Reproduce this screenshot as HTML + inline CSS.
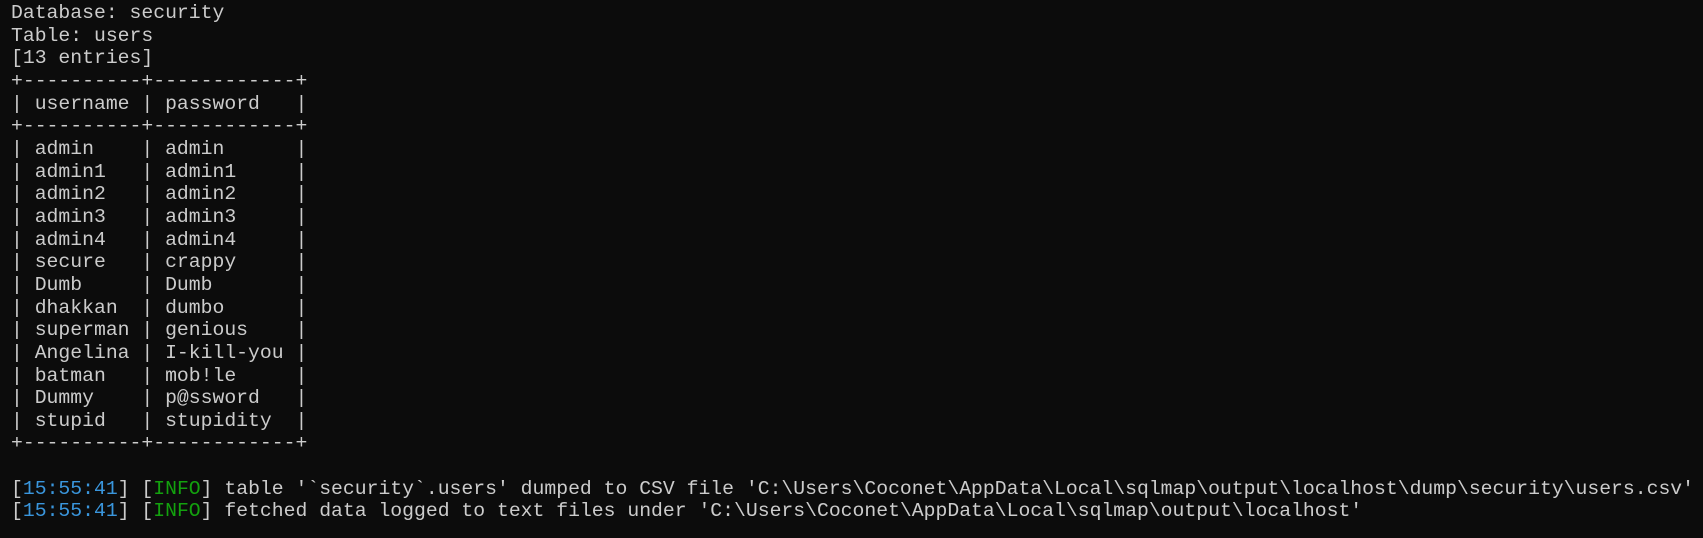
<!DOCTYPE html>
<html><head><meta charset="utf-8"><style>
html,body{margin:0;background:#0c0c0c;width:1703px;height:538px;overflow:hidden}
pre{margin:0;padding:2px 0 0 11px;font-family:"Liberation Mono","DejaVu Sans Mono",monospace;font-size:19.75px;line-height:22.65px;color:#cccccc}
.b{color:#3a96dd}.g{color:#13a10e}
</style></head><body><pre>Database: security
Table: users
[13 entries]
+----------+------------+
| username | password   |
+----------+------------+
| admin    | admin      |
| admin1   | admin1     |
| admin2   | admin2     |
| admin3   | admin3     |
| admin4   | admin4     |
| secure   | crappy     |
| Dumb     | Dumb       |
| dhakkan  | dumbo      |
| superman | genious    |
| Angelina | I-kill-you |
| batman   | mob!le     |
| Dummy    | p@ssword   |
| stupid   | stupidity  |
+----------+------------+

[<span class="b">15:55:41</span>] [<span class="g">INFO</span>] table '`security`.users' dumped to CSV file 'C:\Users\Coconet\AppData\Local\sqlmap\output\localhost\dump\security\users.csv'
[<span class="b">15:55:41</span>] [<span class="g">INFO</span>] fetched data logged to text files under 'C:\Users\Coconet\AppData\Local\sqlmap\output\localhost'
</pre></body></html>
